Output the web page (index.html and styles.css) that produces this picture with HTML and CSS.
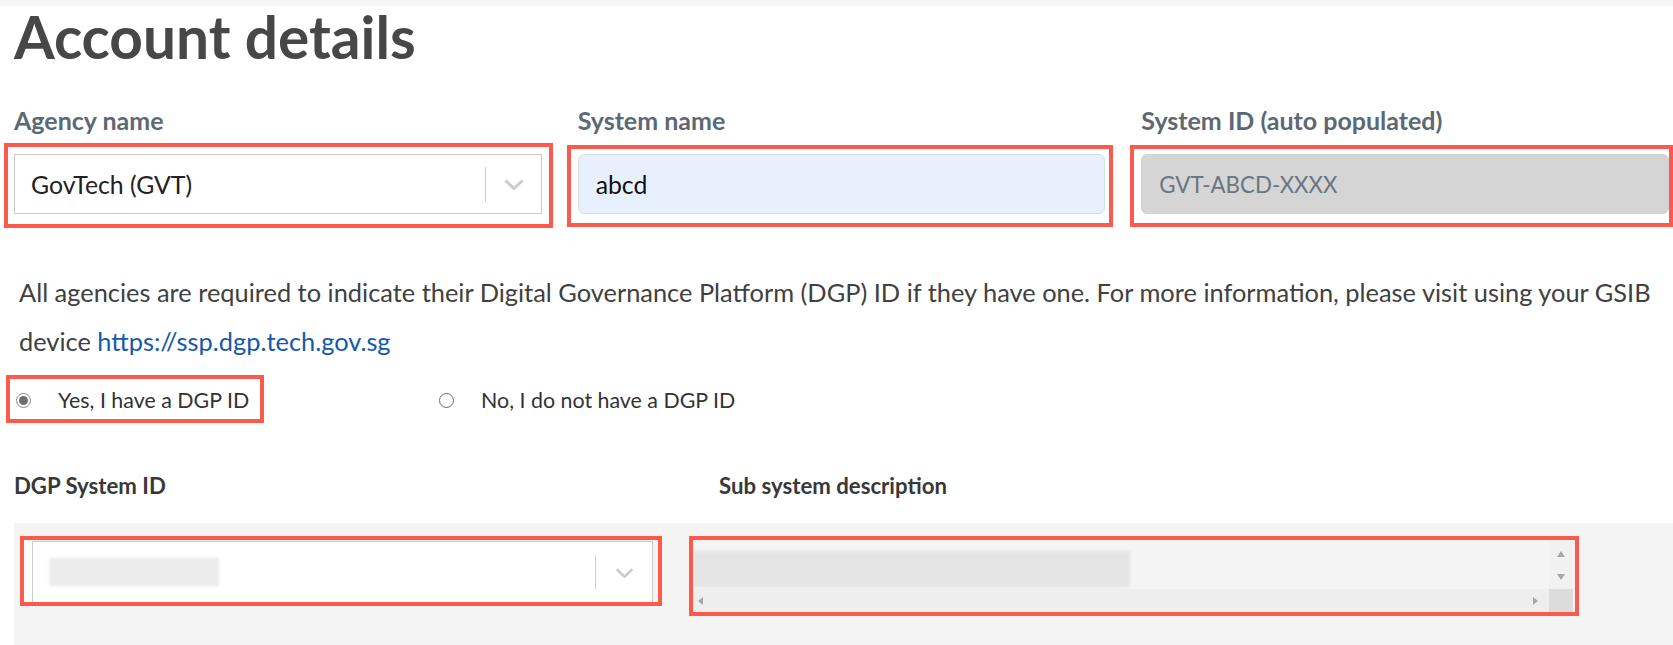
FILE: index.html
```html
<!DOCTYPE html>
<html lang="en">
<head>
<meta charset="utf-8">
<title>Account details</title>
<link rel="stylesheet" href="styles.css">
</head>
<body>
<div class="topbar"></div>
<main class="page">
  <h1 class="title">Account details</h1>

  <div class="row3">
    <div class="field">
      <label class="lbl">Agency name</label>
      <div class="ctl">
        <div class="select">
          <span class="select-value">GovTech (GVT)</span>
          <span class="select-sep"></span>
          <svg class="chev" viewBox="0 0 20 11" width="20" height="11"><path d="M1.5 1.5 L10 9.5 L18.5 1.5"/></svg>
        </div>
        <span class="hl hl-1"></span>
      </div>
    </div>
    <div class="field">
      <label class="lbl">System name</label>
      <div class="ctl">
        <div class="input input-auto">abcd</div>
        <span class="hl hl-2"></span>
      </div>
    </div>
    <div class="field">
      <label class="lbl">System ID (auto populated)</label>
      <div class="ctl">
        <div class="input input-disabled">GVT-ABCD-XXXX</div>
        <span class="hl hl-3"></span>
      </div>
    </div>
  </div>

  <p class="info"><span>All agencies are required to indicate their Digital Governance Platform (DGP) ID if they have one. For more information, please visit using your GSIB</span> <span>device</span> <a class="link" href="#">https://ssp.dgp.tech.gov.sg</a></p>

  <div class="radios">
    <div class="radio-cell">
      <div class="radio-opt">
        <span class="radio radio-on"></span>
        <span class="radio-label">Yes, I have a DGP ID</span>
        <span class="hl hl-r"></span>
      </div>
    </div>
    <div class="radio-cell">
      <div class="radio-opt">
        <span class="radio"></span>
        <span class="radio-label">No, I do not have a DGP ID</span>
      </div>
    </div>
  </div>

  <div class="sublabels">
    <div class="sublbl sublbl-1">DGP System ID</div>
    <div class="sublbl">Sub system description</div>
  </div>

  <div class="gray">
    <div class="ctl4">
      <div class="select select4">
        <span class="blur blur-sel"></span>
        <span class="select-sep sep4"></span>
        <svg class="chev" viewBox="0 0 20 11" width="19" height="10"><path d="M1.5 1.5 L10 9.5 L18.5 1.5"/></svg>
      </div>
      <span class="hl hl-4"></span>
    </div>
    <div class="ctl5">
      <div class="ta">
        <div class="ta-main"><span class="blur blur-ta"></span></div>
        <div class="vscroll">
          <span class="tri tri-up"></span>
          <span class="tri tri-down"></span>
        </div>
        <div class="hscroll">
          <span class="tri tri-left"></span>
          <span class="tri tri-right"></span>
        </div>
        <div class="corner"></div>
      </div>
      <span class="hl hl-5"></span>
    </div>
  </div>
</main>
</body>
</html>
```
FILE: styles.css
```css
html, body {
  margin: 0;
  padding: 0;
  background: #ffffff;
}
body {
  font-family: Lato, "Noto Sans", sans-serif;
  color: #333333;
  overflow: hidden;
}
.topbar {
  height: 6px;
  background: #f6f6f6;
}
.page {
  padding: 0 4px 0 14px;
}
.title {
  margin: 5px 0 0 0;
  font-size: 58.6px;
  line-height: 50px;
  font-weight: 700;
  color: #474747;
}

/* top row */
.row3 {
  display: grid;
  grid-template-columns: repeat(3, 1fr);
  column-gap: 36px;
  margin-top: 44px;
}
.lbl {
  display: block;
  font-size: 25px;
  line-height: 30px;
  font-weight: 700;
  color: #5c6873;
}
.ctl {
  position: relative;
  margin-top: 19px;
  height: 60px;
}
.select {
  box-sizing: border-box;
  height: 100%;
  border: 1px solid #cccccc;
  background: #ffffff;
  display: flex;
  align-items: center;
  padding-left: 16px;
  padding-right: 17px;
}
.select-value {
  flex: 1;
  font-size: 24.8px;
  color: #222222;
}
.select-sep {
  width: 1px;
  height: 35px;
  background: #cccccc;
  margin-right: 18px;
}
.chev {
  display: block;
}
.chev path {
  fill: none;
  stroke: #cccccc;
  stroke-width: 3;
}
.input {
  box-sizing: border-box;
  height: 100%;
  border-radius: 6px;
  display: flex;
  align-items: center;
  padding-left: 17px;
  font-size: 24.8px;
}
.input-auto {
  background: #e8f0fe;
  border: 1px solid #d7dde5;
  color: #111111;
}
.input-disabled {
  background: #d5d5d5;
  border: 1px solid #d2d2d2;
  color: #6a7680;
  font-size: 22.3px;
}

/* annotation boxes */
.hl {
  position: absolute;
  border: 4px solid #fb5a4c;
  pointer-events: none;
}
.hl-1 { top: -11px; left: -10px; right: -11px; bottom: -14px; }
.hl-2 { top: -9px; left: -11px; right: -8px; bottom: -13px; }
.hl-3 { top: -9px; left: -11px; right: -4px; bottom: -13px; }
.hl-r { top: -10px; left: -10px; right: -15px; bottom: -8px; }
.hl-4 { top: -5px; left: -4px; right: -9px; bottom: -3px; }
.hl-5 { top: -5px; left: -4px; right: -6px; bottom: -3px; }

/* info text */
.info {
  margin: 54px 0 0 0;
  padding-left: 5px;
  font-size: 25.4px;
  line-height: 49px;
  color: #404040;
}
.link {
  color: #1559aa;
  text-decoration: none;
}

/* radios */
.radios {
  display: flex;
  margin-top: 19px;
  height: 30px;
  padding-left: 2px;
}
.radio-cell {
  width: 423px;
  display: flex;
  align-items: center;
}
.radio-opt {
  position: relative;
  display: inline-flex;
  align-items: center;
  height: 30px;
}
.radio {
  box-sizing: border-box;
  width: 15px;
  height: 15px;
  border-radius: 50%;
  border: 1px solid #6e6e6e;
  background: #ffffff;
  margin-right: 27px;
  position: relative;
}
.radio-on {
  border-color: #8a8a8a;
}
.radio-on::after {
  content: "";
  position: absolute;
  left: 2px;
  top: 2px;
  width: 9px;
  height: 9px;
  border-radius: 50%;
  background: #6f6f6f;
}
.radio-label {
  font-size: 21.4px;
  color: #333333;
}

/* bottom labels */
.sublabels {
  display: flex;
  margin-top: 58px;
}
.sublbl {
  font-size: 22.2px;
  line-height: 26px;
  font-weight: 700;
  color: #383838;
}
.sublbl-1 {
  width: 705px;
}

/* gray area */
.gray {
  margin-top: 24px;
  margin-right: -4px;
  background: #f4f4f4;
  height: 140px;
  box-sizing: border-box;
  padding: 18px 0 0 10px;
  display: flex;
  align-items: flex-start;
  column-gap: 40px;
}
.ctl4 {
  position: relative;
  width: 629px;
  height: 62px;
  background: #ffffff;
  padding-left: 8px;
  box-sizing: border-box;
}
.select4 {
  position: relative;
  border-bottom: none;
  border-right: 1px solid #cccccc;
  padding-right: 18px;
  justify-content: flex-end;
}
.sep4 {
  height: 33px;
  margin-right: 19px;
}
.blur {
  position: absolute;
  display: block;
  filter: blur(1.5px);
}
.blur-sel {
  left: 16px;
  top: 16px;
  width: 170px;
  height: 28px;
  background: #ececec;
}
.ctl5 {
  position: relative;
  width: 880px;
  height: 72px;
}
.ta {
  display: grid;
  grid-template-columns: 1fr 24px;
  grid-template-rows: 48px 24px;
  height: 72px;
}
.ta-main {
  position: relative;
  background: #f4f4f4;
}
.blur-ta {
  left: 1px;
  top: 10px;
  width: 436px;
  height: 36px;
  background: #e4e4e4;
}
.vscroll {
  position: relative;
  background: #f1f1f1;
}
.hscroll {
  position: relative;
  background: #eeeeee;
}
.corner {
  background: #dcdcdc;
}
.tri {
  position: absolute;
  width: 0;
  height: 0;
}
.tri-up {
  left: 8px;
  top: 10px;
  border-left: 4px solid transparent;
  border-right: 4px solid transparent;
  border-bottom: 6px solid #a6a6a6;
}
.tri-down {
  left: 8px;
  top: 33px;
  border-left: 4px solid transparent;
  border-right: 4px solid transparent;
  border-top: 6px solid #a6a6a6;
}
.tri-left {
  left: 5px;
  top: 8px;
  border-top: 4px solid transparent;
  border-bottom: 4px solid transparent;
  border-right: 5px solid #a6a6a6;
}
.tri-right {
  right: 11px;
  top: 8px;
  border-top: 4px solid transparent;
  border-bottom: 4px solid transparent;
  border-left: 5px solid #a6a6a6;
}
```
